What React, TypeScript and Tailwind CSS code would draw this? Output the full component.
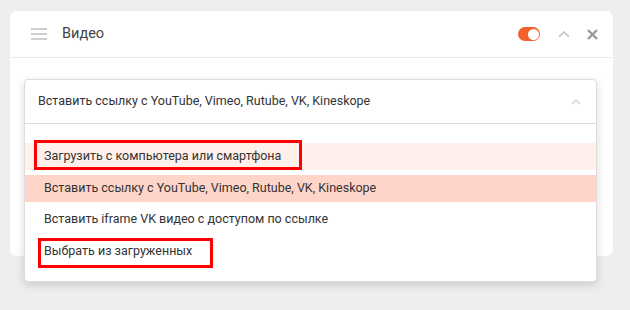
import React from 'react';

const items = [
  { label: 'Загрузить с компьютера или смартфона', bg: 'bg-[#fff0ec]', mark: 'w-[268px]' },
  { label: 'Вставить ссылку с YouTube, Vimeo, Rutube, VK, Kineskope', bg: 'bg-[#ffd5c9]', mark: '' },
  { label: 'Вставить iframe VK видео с доступом по ссылке', bg: '', mark: '' },
  { label: 'Выбрать из загруженных', bg: '', mark: 'w-[175px]' },
];

const Hamburger = () => (
  <svg width="16" height="12" viewBox="0 0 16 12" className="text-[#cfcfcf]">
    <rect x="0" y="0" width="16" height="2" fill="currentColor" />
    <rect x="0" y="5" width="16" height="2" fill="currentColor" />
    <rect x="0" y="10" width="16" height="2" fill="currentColor" />
  </svg>
);

const ChevronUp = ({ w, h, color, sw }: { w: number; h: number; color: string; sw: number }) => (
  <svg width={w} height={h} viewBox={`0 0 ${w} ${h}`} fill="none">
    <path d={`M1 ${h - 1} L${w / 2} 1 L${w - 1} ${h - 1}`} stroke={color} strokeWidth={sw} />
  </svg>
);

const Toggle = () => (
  <div className="w-[22px] h-[14px] rounded-full bg-[#f4602b] flex items-center justify-end pr-[1px]">
    <div className="w-[11px] h-[11px] rounded-full bg-white" />
  </div>
);

const Close = () => (
  <svg width="11" height="11" viewBox="0 0 11 11" fill="none">
    <path d="M1 1 L10 10 M10 1 L1 10" stroke="#9a9a9a" strokeWidth="2.4" />
  </svg>
);

export default function App() {
  return (
    <div className="w-[630px] h-[310px] bg-[#eeeeee] pt-[11px] pl-[10px] overflow-hidden" style={{ fontFamily: 'Roboto, "Noto Sans", sans-serif' }}>
      <div className="w-[603px] bg-white rounded-[7px]">
        <div className="h-[47px] flex items-center pl-[21px] pr-[15px] border-b border-[#ececec]">
          <Hamburger />
          <span className="ml-[15px] text-[14.5px] text-[#444]">Видео</span>
          <div className="ml-auto flex items-center">
            <Toggle />
            <div className="ml-[18px]">
              <ChevronUp w={12} h={7} color="#cccccc" sw={1.8} />
            </div>
            <div className="ml-[17px]">
              <Close />
            </div>
          </div>
        </div>
        <div className="h-[198px] pt-[21px] pl-[14px] pr-[16px]">
          <div className="relative h-[44px]">
            <div className="absolute top-0 left-0 right-0 bg-white border border-[#dddddd] rounded-[4px] shadow-[0_3px_10px_rgba(0,0,0,0.15)]">
              <div className="h-[44px] flex items-center pl-[13px] pr-[15px] border-b border-[#dddddd]">
                <span className="text-[12.5px] text-[#333]">Вставить ссылку с YouTube, Vimeo, Rutube, VK, Kineskope</span>
                <div className="ml-auto">
                  <ChevronUp w={10} h={6} color="#c8c8c8" sw={1.2} />
                </div>
              </div>
              <div className="pt-[19px] pb-[16px] flex flex-col gap-[4.5px]">
                {items.map((it) => (
                  <div key={it.label} className={`relative h-[27px] flex items-center pl-[19px] text-[12.5px] text-[#333] ${it.bg}`}>
                    {it.mark && (
                      <div className={`absolute ${it.label.startsWith('З') ? 'left-[9px] top-[-3px]' : 'left-[13px] top-[0px]'} h-[30px] ${it.mark} border-[3px] border-[#ff0000]`} />
                    )}
                    <span className="relative">{it.label}</span>
                  </div>
                ))}
              </div>
            </div>
          </div>
        </div>
      </div>
    </div>
  );
}
